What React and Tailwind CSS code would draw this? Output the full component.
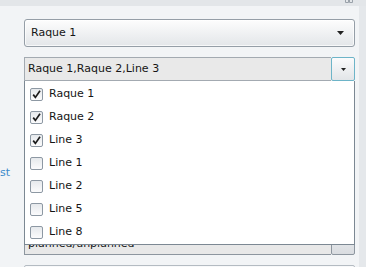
import React from 'react';

const options = [
  { label: 'Raque 1', checked: true },
  { label: 'Raque 2', checked: true },
  { label: 'Line 3', checked: true },
  { label: 'Line 1', checked: false },
  { label: 'Line 2', checked: false },
  { label: 'Line 5', checked: false },
  { label: 'Line 8', checked: false },
];

const Caret = ({ w = 7, h = 4 }) => (
  <svg width={w} height={h} viewBox={`0 0 ${w} ${h}`}>
    <path d={`M0 0H${w}L${w / 2} ${h}Z`} fill="#222" />
  </svg>
);

function CheckBox({ checked }) {
  return (
    <span className="w-[13px] h-[13px] shrink-0 rounded-[2px] border border-[#8d98a3] bg-gradient-to-b from-[#e6e9ec] to-[#fbfbfc] flex items-center justify-center">
      {checked && (
        <svg width="11" height="11" viewBox="0 0 11 11">
          <path d="M2.2 5.6L4.4 8.4L9 1.8" fill="none" stroke="#1c1c1c" strokeWidth="1.7" />
        </svg>
      )}
    </span>
  );
}

export default function App() {
  return (
    <div className="w-[366px] h-[267px] overflow-hidden bg-[#f2f4f6] flex flex-col font-['DejaVu_Sans',sans-serif] text-[11px] text-[#151515]">
      {/* top strip */}
      <div className="h-[6px] shrink-0 bg-[#e3e6e9] flex justify-end items-start pr-[13px]">
        <svg width="8" height="3" viewBox="0 0 8 3">
          <path d="M0.5 0V2.5H3.5V0M4.5 0V2.5H7.5V0" fill="none" stroke="#9aa2aa" strokeWidth="1" />
        </svg>
      </div>

      <div className="flex flex-1 min-h-0">
        {/* labels column */}
        <div className="w-[24px] shrink-0 overflow-hidden flex flex-col pt-[159px]">
          <div className="flex justify-end pr-[14px] h-[16px] items-center shrink-0">
            <span className="whitespace-nowrap text-[#3b8bcb]">Checklist</span>
          </div>
        </div>

        {/* form column */}
        <div className="w-[331px] shrink-0 flex flex-col pt-[13px]">
          {/* first combo */}
          <div className="h-[28px] shrink-0 rounded-[3px] border border-[#959ea7] bg-gradient-to-b from-[#fdfdfd] to-[#e3e6e9] flex items-center pl-[6px] pr-[10px] shadow-[inset_0_0_0_1px_rgba(255,255,255,0.7)]">
            <span className="flex-1">Raque 1</span>
            <Caret />
          </div>

          {/* multi-select combo with open popup */}
          <div className="relative mt-[10px] h-[24px] shrink-0 flex">
            <div className="flex-1 bg-[#e9e9e9] border border-[#a3aab1] border-r-0 flex items-center pl-[3px]">
              Raque 1,Raque 2,Line 3
            </div>
            <div className="w-[24px] rounded-[2px] border border-[#6db4c8] bg-gradient-to-b from-[#fbfbfc] to-[#e2e5e8] flex items-center justify-center">
              <Caret w={5} h={3} />
            </div>

            <div className="absolute left-0 top-[24px] w-[331px] h-[164px] z-10 bg-white border border-[#7c8893] border-t-0 flex flex-col pt-[2px]">
              {options.map((o) => (
                <div key={o.label} className="h-[23px] shrink-0 flex items-center gap-[6px] pl-[5px]">
                  <CheckBox checked={o.checked} />
                  <span>{o.label}</span>
                </div>
              ))}
            </div>
          </div>

          {/* partly hidden combo */}
          <div className="mt-[150px] h-[24px] shrink-0 flex">
            <div className="flex-1 bg-[#e8e8e8] border border-[#8d969f] border-r-0 flex items-center pl-[3px] pt-[2px]">
              planned/unplanned
            </div>
            <div className="w-[24px] rounded-[2px] border border-[#8d969f] bg-gradient-to-b from-[#eceef0] to-[#d9dce0]" />
          </div>

          {/* next control */}
          <div className="mt-[10px] h-[24px] shrink-0 rounded-[2px] border border-[#b4bbc2] bg-[#f8f9fa]" />
        </div>

        <div className="w-[4px] shrink-0" />
        <div className="flex-1 bg-[#e5e8eb]" />
      </div>
    </div>
  );
}
